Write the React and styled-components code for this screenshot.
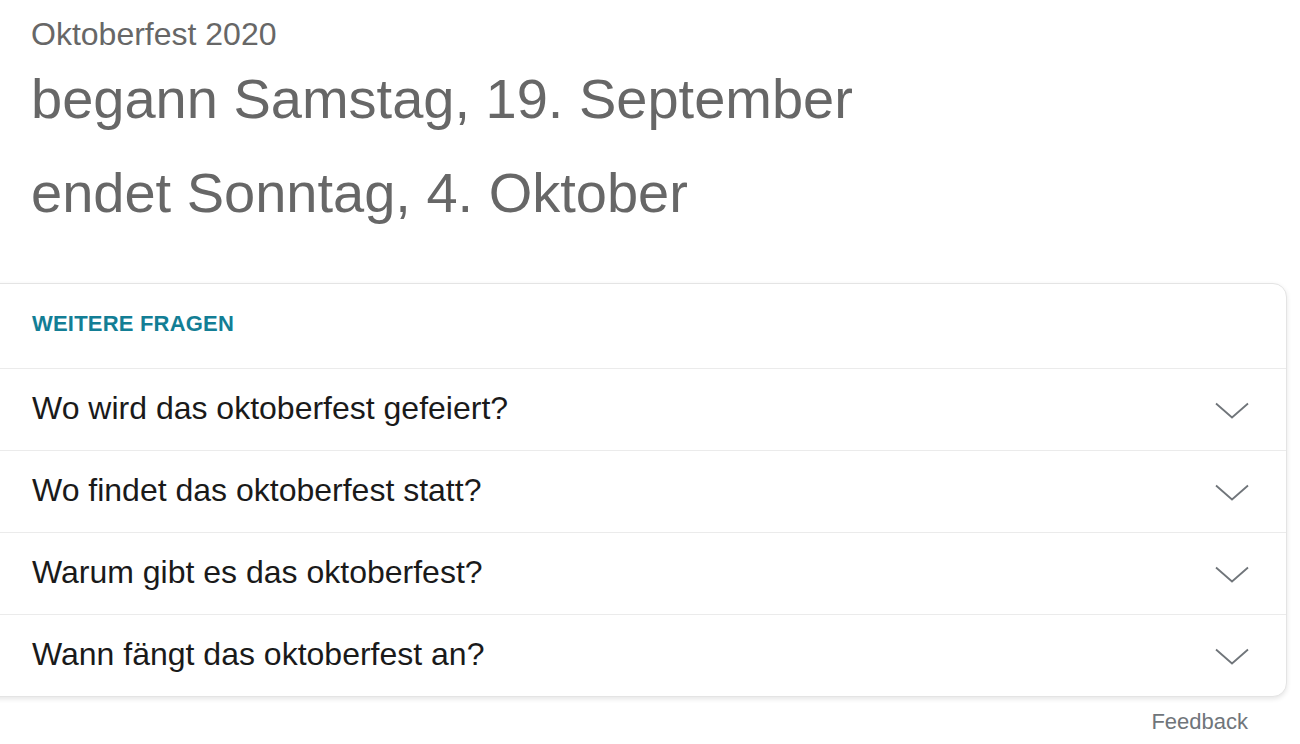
import React from "react";
import styled, { createGlobalStyle } from "styled-components";

const GlobalStyle = createGlobalStyle`
  html, body {
    margin: 0;
    padding: 0;
    background: #fff;
    font-family: "Liberation Sans", Arial, Helvetica, sans-serif;
  }
`;

const Page = styled.div`
  width: 1300px;
  height: 744px;
  overflow: hidden;
  background: #fff;
`;

const Answer = styled.div`
  padding: 14px 0 0 31px;
  color: #676767;
`;

const Title = styled.div`
  font-size: 32px;
  line-height: 40px;
  margin-bottom: -2px;
`;

const DateLine = styled.div`
  font-size: 56px;
  line-height: 94px;
`;

const Card = styled.div`
  margin: 43px 13px 0 -16px;
  border: 1px solid #e4e4e4;
  border-radius: 0 14px 14px 0;
  box-shadow: 0 2px 5px rgba(0, 0, 0, 0.1);
  background: #fff;
`;

const CardHeader = styled.div`
  height: 84px;
  display: flex;
  align-items: center;
  padding: 0 0 5px 47px;
  box-sizing: border-box;
  font-size: 22px;
  font-weight: 700;
  color: #137e95;
  letter-spacing: 0.2px;
`;

const Row = styled.div`
  height: 81px;
  display: flex;
  align-items: center;
  justify-content: space-between;
  padding: 0 37px 0 47px;
  border-top: 1px solid #ebebeb;
  font-size: 32px;
  color: #1a1a1a;
`;

const Question = styled.span`
  margin-top: -2px;
`;

const Chevron = styled.svg`
  width: 34px;
  height: 17px;
  margin-top: 2px;
  flex-shrink: 0;
`;

const Footer = styled.div`
  display: flex;
  justify-content: flex-end;
  padding: 12px 52px 0 0;
  font-size: 22px;
  line-height: 26px;
  color: #70757a;
`;

const questions = [
  "Wo wird das oktoberfest gefeiert?",
  "Wo findet das oktoberfest statt?",
  "Warum gibt es das oktoberfest?",
  "Wann fängt das oktoberfest an?",
];

function ChevronDown() {
  return (
    <Chevron viewBox="0 0 34 17">
      <polyline
        points="1,1.5 17,15.5 33,1.5"
        fill="none"
        stroke="#70757a"
        strokeWidth="1.8"
      />
    </Chevron>
  );
}

export default function App() {
  return (
    <Page>
      <GlobalStyle />
      <Answer>
        <Title>Oktoberfest 2020</Title>
        <DateLine>begann Samstag, 19. September</DateLine>
        <DateLine>endet Sonntag, 4. Oktober</DateLine>
      </Answer>
      <Card>
        <CardHeader>WEITERE FRAGEN</CardHeader>
        {questions.map((q) => (
          <Row key={q}>
            <Question>{q}</Question>
            <ChevronDown />
          </Row>
        ))}
      </Card>
      <Footer>Feedback</Footer>
    </Page>
  );
}
